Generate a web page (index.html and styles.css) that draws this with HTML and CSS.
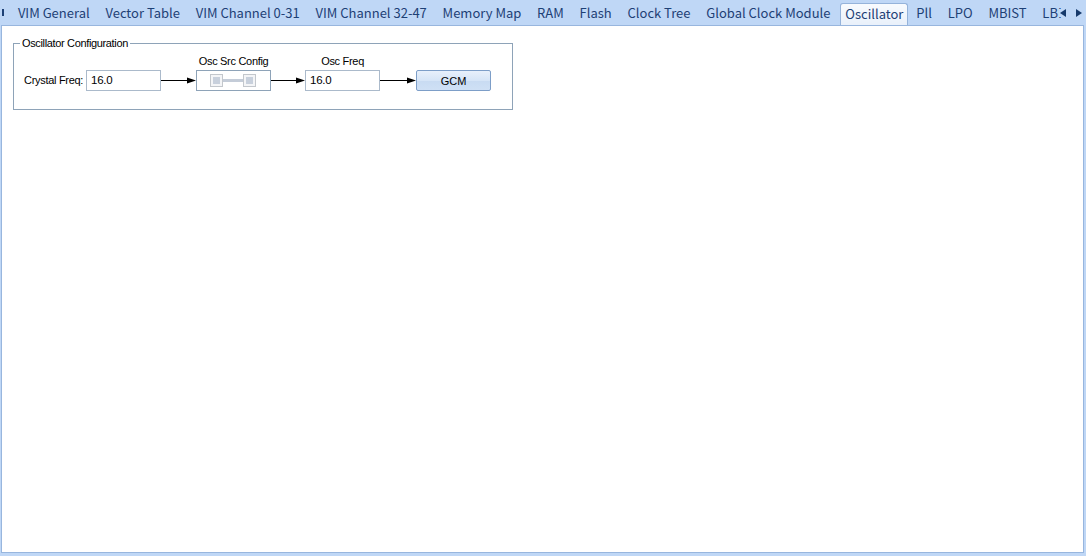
FILE: index.html
```html
<!DOCTYPE html>
<html lang="en">
<head>
    <meta charset="UTF-8">
    <title>Oscillator</title>
    <link rel="stylesheet" href="styles.css">
</head>
<body>
    <div class="tabstrip">
        <span class="tab-stub"></span>
        <div class="tab">VIM General</div>
        <div class="tab">Vector Table</div>
        <div class="tab">VIM Channel 0-31</div>
        <div class="tab">VIM Channel 32-47</div>
        <div class="tab">Memory Map</div>
        <div class="tab">RAM</div>
        <div class="tab">Flash</div>
        <div class="tab">Clock Tree</div>
        <div class="tab">Global Clock Module</div>
        <div class="tab active">Oscillator</div>
        <div class="tab">Pll</div>
        <div class="tab">LPO</div>
        <div class="tab">MBIST</div>
        <div class="tab">LBI</div>
        <div class="scroll-arrows">
            <svg width="6" height="8" viewBox="0 0 6 8"><path d="M6 0 L0 4 L6 8 Z" fill="#15396b"/></svg>
            <svg width="6" height="8" viewBox="0 0 6 8"><path d="M0 0 L6 4 L0 8 Z" fill="#15396b"/></svg>
        </div>
    </div>

    <div class="panel">
        <div class="group">
            <div class="group-title">Oscillator Configuration</div>
            <div class="flow">
                <div class="label">Crystal Freq:</div>
                <div class="textbox">16.0</div>
                <svg class="arrow" width="35" height="21" viewBox="0 0 35 21">
                    <line x1="0" y1="10.5" x2="28" y2="10.5" stroke="#000" stroke-width="1"/>
                    <path d="M26 7.5 L35 10.5 L26 13.5 Z" fill="#000"/>
                </svg>
                <div class="stage">
                    <div class="stage-label">Osc Src Config</div>
                    <div class="slider">
                        <span class="knob"></span>
                        <span class="track"></span>
                        <span class="knob"></span>
                    </div>
                </div>
                <svg class="arrow" width="34" height="21" viewBox="0 0 34 21">
                    <line x1="0" y1="10.5" x2="27" y2="10.5" stroke="#000" stroke-width="1"/>
                    <path d="M25 7.5 L34 10.5 L25 13.5 Z" fill="#000"/>
                </svg>
                <div class="stage">
                    <div class="stage-label">Osc Freq</div>
                    <div class="textbox">16.0</div>
                </div>
                <svg class="arrow" width="36" height="21" viewBox="0 0 36 21">
                    <line x1="0" y1="10.5" x2="29" y2="10.5" stroke="#000" stroke-width="1"/>
                    <path d="M27 7.5 L36 10.5 L27 13.5 Z" fill="#000"/>
                </svg>
                <button class="btn">GCM</button>
            </div>
        </div>
    </div>
</body>
</html>
```

FILE: styles.css
```css
* {
    box-sizing: border-box;
    margin: 0;
    padding: 0;
}
html, body {
    height: 100%;
}
body {
    background-color: #bfd7f6;
    font-family: "Liberation Sans", Arial, sans-serif;
    display: flex;
    flex-direction: column;
    overflow: hidden;
}
.tabstrip {
    height: 25px;
    display: flex;
    align-items: flex-end;
    position: relative;
    padding-left: 2px;
    font-family: "Noto Sans CJK SC", "Noto Sans", sans-serif;
    font-size: 13px;
    color: #1d4075;
    white-space: nowrap;
    overflow: hidden;
}
.tab-stub {
    width: 2px;
    height: 7px;
    background-color: #1d4075;
    align-self: center;
    margin-right: 6px;
}
.tab {
    height: 22px;
    line-height: 19px;
    padding: 0 7.9px;
}
.tab.active {
    margin: 0 0 0 2px;
    padding: 0 4px;
    background: linear-gradient(#f8fbfe, #e8f0fa);
    border: 1px solid #95b3da;
    border-bottom: none;
    border-radius: 3px 3px 0 0;
    position: relative;
    z-index: 1;
    height: 23px;
    line-height: 20px;
    margin-bottom: -1px;
}
.scroll-arrows {
    position: absolute;
    right: 4px;
    top: 9px;
    display: flex;
    gap: 10px;
    padding-left: 1px;
    background-color: #bfd7f6;
}
.panel {
    flex: 1;
    background-color: #fff;
    border: 1px solid #98b6de;
    margin: 0 2px 3px 1px;
    padding: 17px 0 0 11px;
}
.group {
    position: relative;
    width: 500px;
    height: 67px;
    border: 1px solid #8ea3b8;
    padding: 11px 0 0 10px;
}
.group-title {
    position: absolute;
    top: -8px;
    left: 6px;
    padding: 0 2px;
    background-color: #fff;
    font-size: 11px;
    letter-spacing: -0.35px;
    line-height: 14px;
    color: #000;
}
.flow {
    display: flex;
    align-items: flex-end;
    font-size: 11px;
    letter-spacing: -0.3px;
    color: #000;
}
.label {
    height: 21px;
    line-height: 21px;
    margin-right: 3px;
}
.textbox {
    width: 75px;
    height: 21px;
    border: 1px solid #abbacb;
    padding-left: 4px;
    line-height: 19px;
    font-size: 11.5px;
}
.arrow {
    display: block;
}
.stage {
    display: flex;
    flex-direction: column;
    align-items: center;
}
.stage-label {
    line-height: 13px;
    margin-bottom: 2px;
}
.slider {
    width: 75px;
    height: 21px;
    border: 1px solid #8ea3b8;
    display: flex;
    align-items: center;
    padding-left: 13px;
}
.knob {
    width: 13px;
    height: 13px;
    border: 1px solid #c3c7cc;
    background-color: #f4f5f7;
    display: flex;
    align-items: center;
    justify-content: center;
}
.knob::after {
    content: "";
    width: 7px;
    height: 7px;
    background-color: #c8d0dc;
}
.track {
    width: 20px;
    height: 3px;
    background-color: #c4ccd8;
}
.btn {
    width: 75px;
    height: 21px;
    border: 1px solid #7d9ec8;
    border-radius: 2px;
    background: linear-gradient(#e8f0fb 0%, #d6e5f7 50%, #c8dbf2 51%, #cfe0f5 100%);
    font-family: "Liberation Sans", Arial, sans-serif;
    font-size: 11px;
    color: #000;
}
```
